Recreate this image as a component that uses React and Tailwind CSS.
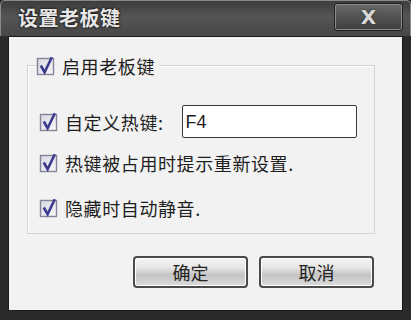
import React from "react";

const FONT = { fontFamily: '"Noto Sans CJK SC", "Noto Sans", sans-serif' };

function Check() {
  return (
    <svg width="20" height="20" viewBox="0 0 20 20" className="shrink-0">
      <defs>
        <linearGradient id="cb" x1="0" y1="0" x2="1" y2="1">
          <stop offset="0" stopColor="#d8d8e2" />
          <stop offset="1" stopColor="#f6f6fa" />
        </linearGradient>
      </defs>
      <rect x="1.5" y="2.5" width="16" height="16" fill="url(#cb)" stroke="#85859a" strokeWidth="1.4" />
      <path d="M4.8 9.5 L8.6 16.2 L15.8 1.2" fill="none" stroke="#3b3b8e" strokeWidth="2.6" strokeLinejoin="miter" />
    </svg>
  );
}

function Row({ children, className = "" }) {
  return (
    <div className={"flex items-center gap-[6px] text-[18px] leading-none text-[#1e1e1e] tracking-[0.6px] " + className}>
      <Check />
      {children}
    </div>
  );
}

function Btn({ children }) {
  return (
    <div className="w-[115px] h-[32px] rounded-[4px] border-[2px] border-[#4a4a4a] bg-[linear-gradient(#f4f4f4_0%,#e6e6e6_35%,#c4c4c4_60%,#dcdcdc_100%)] flex items-center justify-center text-[18px] text-[#222] leading-none shadow-[inset_0_0_0_1px_#ffffff]">
      {children}
    </div>
  );
}

export default function App() {
  return (
    <div style={FONT} className="w-[411px] h-[320px] bg-[#2a2a2a] flex flex-col overflow-hidden">
      {/* title bar */}
      <div className="h-[36px] flex items-start bg-[linear-gradient(180deg,#3c3c3c_0%,#555555_45%,#474747_100%)] border-t border-l border-r border-[#8a8a8a] rounded-t-[5px]">
        <div
          className="ml-[17px] mt-[7px] text-[20px] leading-none font-bold text-[#e6e6e6] tracking-[0.5px]"
          style={{ textShadow: "0 0 3px #111, 0 0 2px #111" }}
        >
          设置老板键
        </div>
        <div className="ml-auto mr-[7px] mt-[2px] w-[69px] h-[28px] rounded-[3px] border border-[#222] bg-[linear-gradient(180deg,#6a6a6a_0%,#525252_50%,#3e3e3e_100%)] shadow-[inset_0_0_0_1px_#8a8a8a] flex items-center justify-center">
          <span className="text-[20px] font-bold leading-none text-[#d8d8d8]" style={{ fontFamily: '"DejaVu Sans", sans-serif', textShadow: "0 0 2px #222" }}>
            X
          </span>
        </div>
      </div>
      {/* client */}
      <div className="flex-1 mx-[8px] mb-[9px] bg-[#f2f2f2] flex flex-col border border-[#1a1a1a]">
        <div className="mt-[28px] ml-[18px] w-[348px] h-[169px] border border-[#d2d2d2] shadow-[inset_1px_1px_0_#ffffff] flex flex-col">
          <div className="-mt-[10px] ml-[8px] w-fit pr-[4px] bg-[#f2f2f2]">
            <Row>启用老板键</Row>
          </div>
          <div className="mt-[29px] ml-[11px] flex items-center">
            <Row>自定义热键:</Row>
            <div className="ml-[18px] w-[175px] h-[33px] bg-white border-[1.5px] border-[#3a3a3a] rounded-[2px] flex items-center pl-[3px] text-[18px] text-[#1e1e1e] leading-none" style={{ fontFamily: '"Liberation Sans", sans-serif' }}>
              F4
            </div>
          </div>
          <Row className="mt-[15px] ml-[11px]">热键被占用时提示重新设置.</Row>
          <Row className="mt-[25px] ml-[11px]">隐藏时自动静音.</Row>
        </div>
        <div className="mt-[22px] ml-[124px] flex gap-[11px]">
          <Btn>确定</Btn>
          <Btn>取消</Btn>
        </div>
      </div>
    </div>
  );
}
